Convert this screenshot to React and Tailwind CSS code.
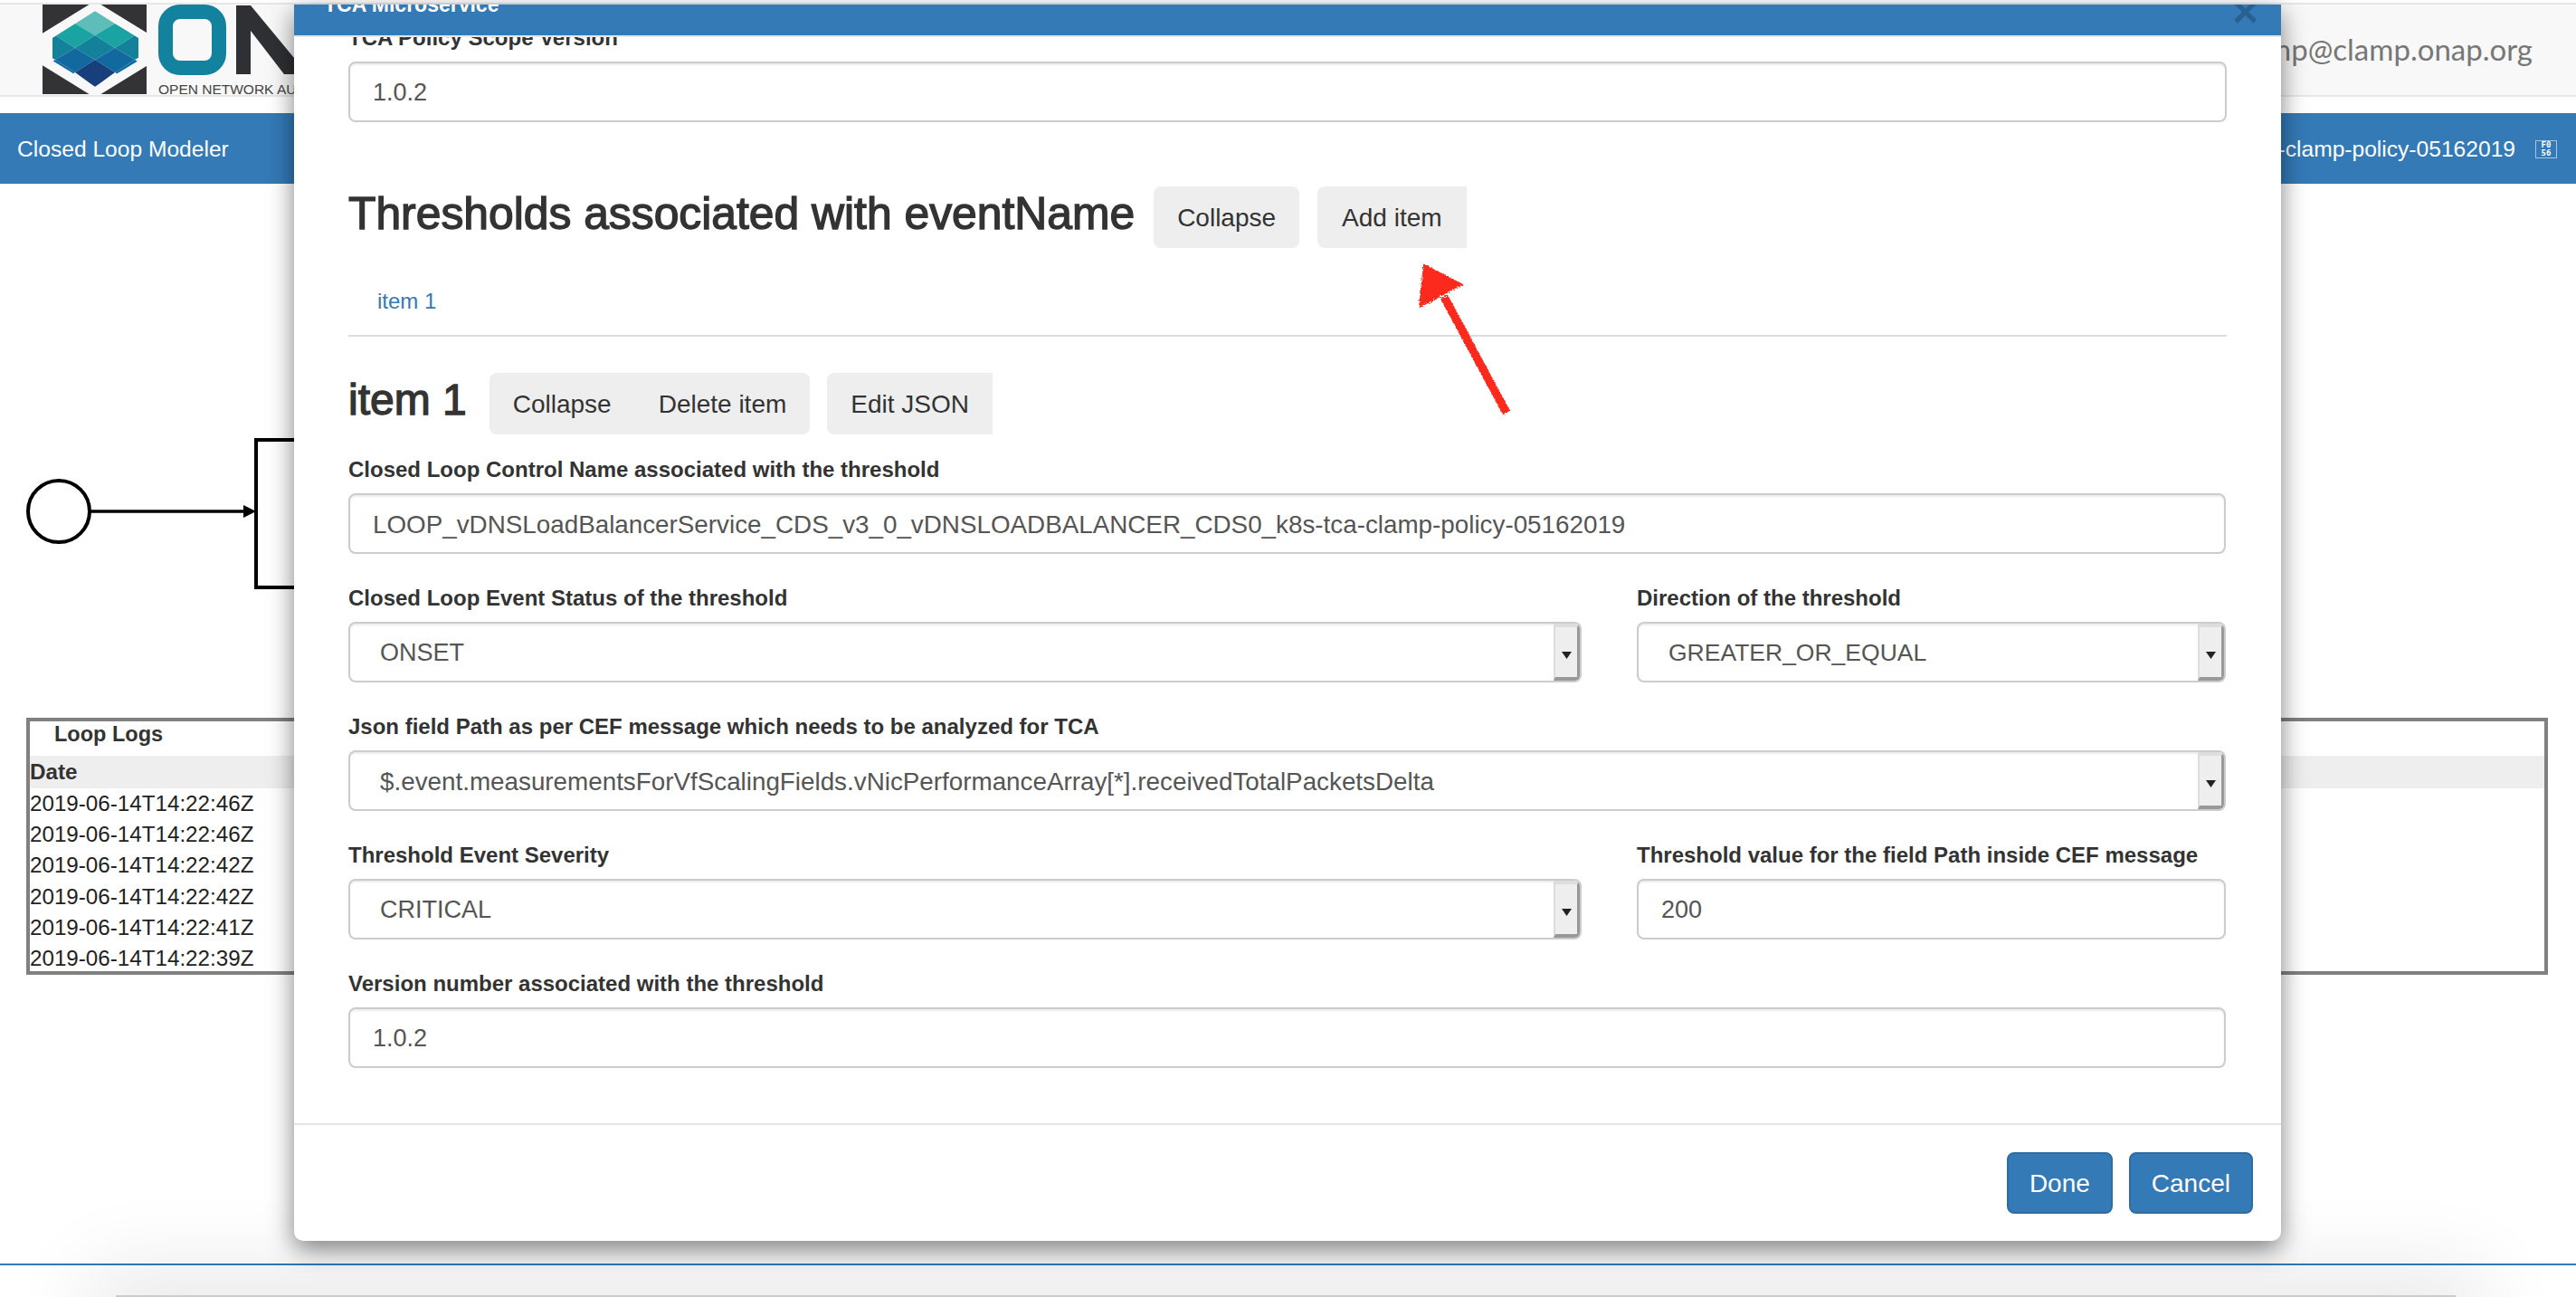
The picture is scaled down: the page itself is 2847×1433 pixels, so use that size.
const logRows = [
  "2019-06-14T14:22:46Z",
  "2019-06-14T14:22:46Z",
  "2019-06-14T14:22:42Z",
  "2019-06-14T14:22:42Z",
  "2019-06-14T14:22:41Z",
  "2019-06-14T14:22:39Z",
];

const OnapLogo = () => (
  <svg width="290" height="100" viewBox="47 5 290 100" className="shrink-0">
    <defs>
      <clipPath id="hex">
        <polygon points="105,12 153,42 153,67 105,96 58,67 58,42" />
      </clipPath>
    </defs>
    <rect x="47" y="5" width="115" height="99" fill="#333335" />
    <polygon points="105,1 170,41 170,68 105,108 40,68 40,41" fill="#f8f8f8" />
    <g clipPath="url(#hex)">
      <polygon points="105,12 127,26 105,39 83,26" fill="#5fbdb9" />
      <polygon points="83,26 105,39 83,53 61,39" fill="#19a3a3" />
      <polygon points="127,26 149,39 127,53 105,39" fill="#19a3a3" />
      <polygon points="61,39 83,53 61,66 39,53" fill="#14819b" />
      <polygon points="105,39 127,53 105,66 83,53" fill="#14819b" />
      <polygon points="149,39 171,53 149,66 127,53" fill="#14819b" />
      <polygon points="83,53 105,66 83,80 61,66" fill="#11699f" />
      <polygon points="127,53 149,66 127,80 105,66" fill="#11699f" />
      <polygon points="61,66 83,80 61,93 39,80" fill="#11699f" />
      <polygon points="149,66 171,80 149,93 127,80" fill="#11699f" />
      <polygon points="105,66 127,80 105,96 83,80" fill="#173f7c" />
    </g>
    <rect x="183" y="13" width="59" height="62" rx="16" fill="none" stroke="#13829f" strokeWidth="16" />
    <polygon points="261,6 277,6 330,70 330,82 314,82 277,34 277,82 261,82" fill="#2f3033" />
    <text x="175" y="104" fontSize="15.5" fill="#444" fontFamily="Liberation Sans, sans-serif">
      OPEN NETWORK AUTOMATION PLATFORM
    </text>
  </svg>
);

const Field = ({ label, className = "", children }) => (
  <div className={className}>
    <div className="h-[30px] mb-[11px] text-[24px] leading-[30px] font-bold text-[#333] whitespace-nowrap">
      {label}
    </div>
    {children}
  </div>
);

const TextInput = ({ value, className = "text-[27px]" }) => (
  <div className={`h-[67px] flex items-center pt-[2px] px-[25px] rounded-[8px] border-2 border-[#ccc] bg-white shadow-[inset_0_2px_2px_rgba(0,0,0,0.075)] text-[#555] whitespace-nowrap ${className}`}>
    {value}
  </div>
);

const SelectBox = ({ value, className = "text-[27px]" }) => (
  <div className="h-[67px] flex rounded-[8px] border-2 border-[#ccc] bg-white overflow-hidden shadow-[inset_0_2px_2px_rgba(0,0,0,0.075)]">
    <div className={`flex-1 flex items-center pt-[2px] pl-[33px] text-[#555] whitespace-nowrap ${className}`}>{value}</div>
    <div className="w-[29px] flex justify-center pt-[27px] bg-[#eee] border-t-[4px] border-l-[2px] border-r-[3px] border-b-[4px] border-t-[#ddd] border-l-[#ddd] border-r-[#999] border-b-[#999]">
      <svg width="11" height="8" viewBox="0 0 11 8">
        <polygon points="0,0 11,0 5.5,8" fill="#222" />
      </svg>
    </div>
  </div>
);

const GrayButton = ({ children, className = "" }) => (
  <button className={`h-[68px] pt-[1px] px-[26px] bg-[#eee] text-[28px] text-[#333] whitespace-nowrap ${className}`}>
    {children}
  </button>
);

const BlueButton = ({ children }) => (
  <button className="h-[68px] pt-[1px] px-[23px] rounded-[8px] bg-[#337ab7] border-2 border-[#2e6da4] text-[28px] text-white">
    {children}
  </button>
);

const RedArrow = () => (
  <svg className="absolute left-[1560px] top-[285px]" width="120" height="190" viewBox="1560 285 120 190">
    <defs>
      <filter id="rough">
        <feTurbulence type="fractalNoise" baseFrequency="0.6" numOctaves="2" seed="3" />
        <feDisplacementMap in="SourceGraphic" scale="5" />
      </filter>
    </defs>
    <g filter="url(#rough)" fill="#fb2a1b" stroke="#fb2a1b">
      <polygon points="1574,293 1615,314 1569,339" strokeWidth="2" />
      <line x1="1596" y1="328" x2="1665" y2="456" strokeWidth="9" />
    </g>
  </svg>
);

const Modal = () => (
  <div className="absolute left-[325px] top-[5px] w-[2196px] h-[1366px] flex flex-col bg-white rounded-b-[10px] shadow-[0_9px_28px_rgba(0,0,0,0.5)] overflow-visible">
    <div className="relative h-[34px] shrink-0 bg-[#337ab7] overflow-hidden">
      <div className="absolute left-[33px] -top-[15px] text-[23px] leading-[30px] font-bold text-white">
        TCA Microservice
      </div>
      <div className="absolute left-[2142px] -top-[17px] text-[50px] leading-[50px] font-bold text-black opacity-20">
        ×
      </div>
    </div>
    <div className="relative flex-1 border-t-2 border-[#e5e5e5] px-[60px] overflow-hidden">
      <Field label="TCA Policy Scope Version" className="-mt-[14px]">
        <TextInput value="1.0.2" />
      </Field>

      <div className="mt-[71px] flex items-center">
        <h3 className="text-[49.8px] leading-[60px] pb-[8px] text-[#333] whitespace-nowrap [-webkit-text-stroke:1.4px_#333]">
          Thresholds associated with eventName
        </h3>
        <GrayButton className="ml-[21px] rounded-[8px]">Collapse</GrayButton>
        <GrayButton className="ml-[20px] rounded-l-[8px] px-[27px]">Add item</GrayButton>
      </div>
      <div className="mt-[44px] pl-[32px] h-[30px] text-[24px] leading-[30px] text-[#337ab7]">item 1</div>
      <div className="mt-[22px] h-[2px] bg-[#ddd]" />

      <div className="mt-[40px] flex items-center">
        <h3 className="text-[48px] leading-[60px] pb-[8px] text-[#333] whitespace-nowrap [-webkit-text-stroke:1.4px_#333]">
          item 1
        </h3>
        <div className="ml-[25px] flex">
          <GrayButton className="rounded-l-[8px]">Collapse</GrayButton>
          <GrayButton className="rounded-r-[8px]">Delete item</GrayButton>
        </div>
        <GrayButton className="ml-[19px] rounded-l-[8px]">Edit JSON</GrayButton>
      </div>

      <div className="mt-[24px] grid grid-cols-[1363px_651px] gap-x-[61px] gap-y-[34px]">
        <Field label="Closed Loop Control Name associated with the threshold" className="col-span-2">
          <TextInput
            value="LOOP_vDNSLoadBalancerService_CDS_v3_0_vDNSLOADBALANCER_CDS0_k8s-tca-clamp-policy-05162019"
            className="text-[27.8px]"
          />
        </Field>
        <Field label="Closed Loop Event Status of the threshold">
          <SelectBox value="ONSET" />
        </Field>
        <Field label="Direction of the threshold">
          <SelectBox value="GREATER_OR_EQUAL" className="text-[26.5px]" />
        </Field>
        <Field label="Json field Path as per CEF message which needs to be analyzed for TCA" className="col-span-2">
          <SelectBox
            value="$.event.measurementsForVfScalingFields.vNicPerformanceArray[*].receivedTotalPacketsDelta"
            className="text-[27.8px]"
          />
        </Field>
        <Field label="Threshold Event Severity">
          <SelectBox value="CRITICAL" />
        </Field>
        <Field label="Threshold value for the field Path inside CEF message">
          <TextInput value="200" />
        </Field>
        <Field label="Version number associated with the threshold" className="col-span-2">
          <TextInput value="1.0.2" />
        </Field>
      </div>
    </div>
    <div className="shrink-0 h-[130px] border-t-2 border-[#e5e5e5] flex justify-end items-start gap-[18px] pt-[30px] pr-[31px]">
      <BlueButton>Done</BlueButton>
      <BlueButton>Cancel</BlueButton>
    </div>
  </div>
);

export default function App() {
  return (
    <div className="relative h-[1433px] overflow-hidden bg-white pt-[3px] font-['Liberation_Sans',Arial,sans-serif] flex flex-col">
      <header className="h-[104px] shrink-0 flex items-center justify-between bg-[#f8f8f8] border-y-2 border-[#e7e7e7] pl-[47px] pr-[48px]">
        <OnapLogo />
        <span className="font-['Lato',sans-serif] text-[33px] text-[#777]">clamp@clamp.onap.org</span>
      </header>

      <nav className="mt-[18px] h-[78px] shrink-0 flex items-center justify-between bg-[#337ab7] pt-[2px] pl-[19px] pr-[21px] text-[24.6px] text-white">
        <span>Closed Loop Modeler</span>
        <div className="flex items-center gap-[22px]">
          <span>LOOP_vDNSLoadBalancerService_CDS_k8s-tca-clamp-policy-05162019</span>
          <span className="w-[24px] h-[20px] border border-[#a9c6e0] flex flex-col items-center font-['DejaVu_Sans_Mono',monospace] text-[9px] leading-[9px] font-bold">
            <span>F0</span>
            <span>56</span>
          </span>
        </div>
      </nav>

      <div className="h-[590px] shrink-0">
        <svg width="700" height="590" viewBox="0 203 700 590">
          <circle cx="65" cy="565" r="34" fill="white" stroke="black" strokeWidth="4" />
          <line x1="99" y1="565" x2="272" y2="565" stroke="black" strokeWidth="3.5" />
          <polygon points="269,558 283,565 269,572" fill="black" />
          <rect x="283" y="486" width="300" height="163" fill="white" stroke="black" strokeWidth="4" />
        </svg>
      </div>

      <section className="ml-[29px] w-[2787px] h-[284px] shrink-0 border-4 border-[#808080] text-[24.2px] text-[#222]">
        <div className="h-[38px] pl-[27px] leading-[28px] text-[23.5px] font-bold text-[#333]">Loop Logs</div>
        <div className="h-[36px] leading-[36px] bg-[#eee] font-bold text-[#333]">Date</div>
        {logRows.map((date, i) => (
          <div key={i} className="h-[34.2px] leading-[34px]">
            {date}
          </div>
        ))}
      </section>

      <footer className="mt-[319px] shrink-0 h-[2px] bg-[#337ab7]" />
      <div className="absolute left-[128px] top-[1431px] w-[2586px] h-[40px] bg-[#ccc] shadow-[0_0_90px_30px_rgba(0,0,0,0.09)]" />

      <Modal />
      <RedArrow />
    </div>
  );
}
